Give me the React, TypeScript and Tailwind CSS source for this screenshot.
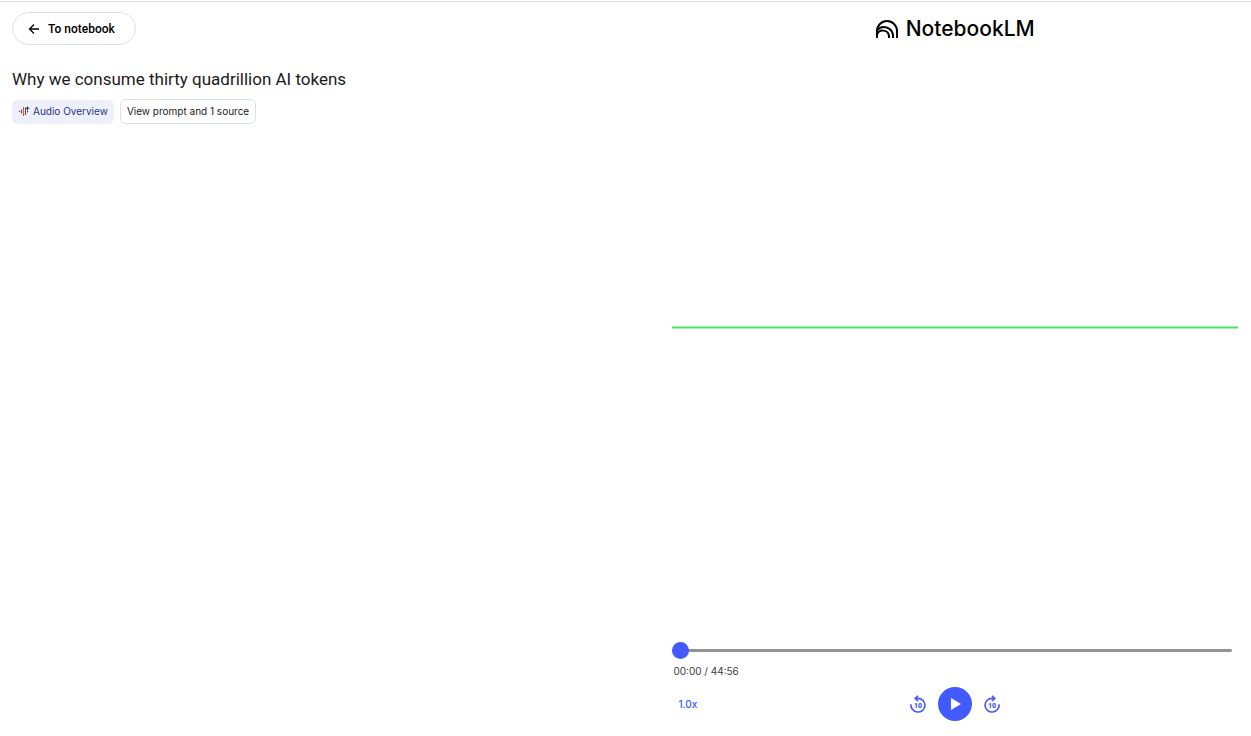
import { useState } from 'react';

export default function App() {
    return (
        <div className="min-h-screen bg-white pt-px font-['Inter','Liberation_Sans',sans-serif] text-[#1b1b1c]">
            <div className="border-t border-[#dfe1e5]" />
            <main className="grid min-h-[calc(100vh-2px)] grid-cols-[8fr_7fr] gap-[14px] pt-2.5 pr-[13px] pb-[15px] pl-3">
                <NotebookInfo />
                <Player />
            </main>
        </div>
    );
}

function NotebookInfo() {
    return (
        <section className="flex flex-col items-start">
            <a
                href="#notebook"
                className="flex h-[33px] items-center gap-2 rounded-full border border-[#dde1eb] pr-5 pl-[15px] font-['Roboto',sans-serif] text-xs font-medium text-black"
            >
                <ArrowIcon />
                To notebook
            </a>
            <h1 className="mt-[22px] font-['Roboto',sans-serif] text-[17px] leading-6">
                Why we consume thirty quadrillion AI tokens
            </h1>
            <div className="mt-2 flex items-center gap-1.5">
                <span className="flex h-6 items-center gap-[3px] rounded-md bg-[#edeffa] px-1.5 text-[10px] text-[#1f3c7d]">
                    <AudioIcon />
                    Audio Overview
                </span>
                <button
                    type="button"
                    className="h-[25px] rounded-md border border-[#dde1eb] px-1.5 text-[10px] text-[#1b1b1c]"
                >
                    View prompt and 1 source
                </button>
            </div>
        </section>
    );
}

function Player() {
    const [position, setPosition] = useState(0);
    const [rate, setRate] = useState(1);

    return (
        <section className="flex flex-col">
            <header className="flex h-[34px] items-center justify-center gap-2">
                <LogoMark />
                <span className="text-[21px] leading-8 font-medium text-black">NotebookLM</span>
            </header>

            <div className="flex flex-1 items-center pb-[34px]">
                <div className="h-[3px] w-full border-y border-[#a0f5ae] bg-[#4be36a]" />
            </div>

            <div className="pr-1.5">
                <input
                    type="range"
                    min={0}
                    max={2696}
                    value={position}
                    onChange={(e) => setPosition(Number(e.target.value))}
                    aria-label="Playback position"
                    className="block h-[17px] w-full appearance-none bg-transparent [&::-webkit-slider-runnable-track]:h-[3px] [&::-webkit-slider-runnable-track]:rounded-full [&::-webkit-slider-runnable-track]:bg-[#929292] [&::-webkit-slider-thumb]:-mt-[7px] [&::-webkit-slider-thumb]:size-[17px] [&::-webkit-slider-thumb]:appearance-none [&::-webkit-slider-thumb]:rounded-full [&::-webkit-slider-thumb]:bg-[#425aff]"
                />
            </div>
            <div className="mt-1 pl-px text-[10px] leading-4 text-[#3c3c40]">{formatTime(position)} / 44:56</div>

            <div className="mt-2 grid grid-cols-[1fr_auto_1fr] items-center">
                <button
                    type="button"
                    onClick={() => setRate(rate === 1 ? 1.5 : 1)}
                    className="justify-self-start px-1.5 text-[10px] font-medium text-[#425aff]"
                >
                    {rate.toFixed(1)}x
                </button>
                <div className="flex items-center gap-[11px] text-[#425aff]">
                    <button type="button" aria-label="Back 10 seconds" onClick={() => setPosition(Math.max(0, position - 10))}>
                        <SkipIcon />
                    </button>
                    <button
                        type="button"
                        aria-label="Play"
                        className="flex size-[34px] items-center justify-center rounded-full bg-[#425aff] text-white"
                    >
                        <svg viewBox="0 0 20 20" className="size-5" fill="currentColor">
                            <path d="M6 4v12l10-6z" />
                        </svg>
                    </button>
                    <button type="button" aria-label="Forward 10 seconds" onClick={() => setPosition(Math.min(2696, position + 10))}>
                        <SkipIcon forward />
                    </button>
                </div>
            </div>
        </section>
    );
}

function formatTime(seconds: number) {
    const minutes = Math.floor(seconds / 60);
    return `${String(minutes).padStart(2, '0')}:${String(seconds % 60).padStart(2, '0')}`;
}

function ArrowIcon() {
    return (
        <svg viewBox="0 0 12 12" className="size-3" fill="none" stroke="currentColor" strokeWidth="1.3">
            <path d="M11 6H1.8M6 1.5 1.5 6 6 10.5" />
        </svg>
    );
}

function AudioIcon() {
    return (
        <svg viewBox="0 0 12 12" className="size-3" fill="none" strokeWidth="1.1">
            <path d="M1.5 4.7v1.4M3.5 3.4v4" stroke="#6d4a6b" />
            <path d="M5.5 1v9" stroke="#d2571f" />
            <path d="M7.5 1.5v7.5" stroke="#8a3f45" />
            <path d="M9.5 4.5v2" stroke="#44406f" />
            <path d="M9.5 0l.7 1.5 1.6.7-1.6.7-.7 1.6-.7-1.6-1.6-.7 1.6-.7z" fill="#1f3c7d" />
        </svg>
    );
}

function SkipIcon({ forward = false }: { forward?: boolean }) {
    return (
        <svg viewBox="0 0 18 18" className="size-[18px]" fill="none" stroke="currentColor" strokeWidth="1.7">
            <g transform={forward ? 'matrix(-1 0 0 1 18 0)' : undefined}>
                <path d="M2 9.4a7 6.8 0 1 0 7-6H6.2" />
                <path d="M9 .8 6.3 3.4 9 6" />
            </g>
            <text
                x="9"
                y="12.6"
                textAnchor="middle"
                fontSize="7"
                fontWeight="900"
                fill="currentColor"
                stroke="none"
                className="font-['Roboto',sans-serif]"
            >
                10
            </text>
        </svg>
    );
}

function LogoMark() {
    return (
        <svg viewBox="0 0 22 18" className="h-[18px] w-[22px]" fill="none" stroke="#000" strokeWidth="2">
            <path d="M1 18v-7a10 10 0 0 1 20 0v7" />
            <path d="M1 10.2A9.2 9.2 0 0 1 17 15v3" />
            <path d="M1 14.6a6.2 6.2 0 0 1 12 1.8V18" />
        </svg>
    );
}
